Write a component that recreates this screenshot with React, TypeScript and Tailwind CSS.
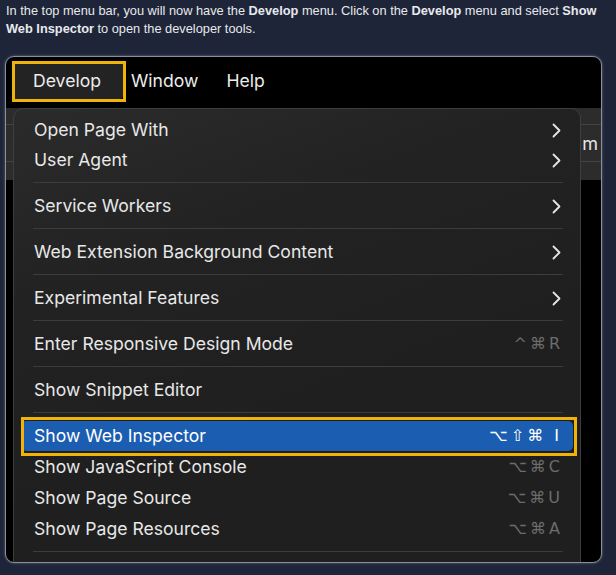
import React from "react";

type Item =
  | { kind: "sep" }
  | { kind: "item"; label: string; chevron?: boolean; shortcut?: string; active?: boolean; tall?: boolean };

const items: Item[] = [
  { kind: "item", label: "Open Page With", chevron: true },
  { kind: "item", label: "User Agent", chevron: true },
  { kind: "sep" },
  { kind: "item", label: "Service Workers", chevron: true },
  { kind: "sep" },
  { kind: "item", label: "Web Extension Background Content", chevron: true },
  { kind: "sep" },
  { kind: "item", label: "Experimental Features", chevron: true },
  { kind: "sep" },
  { kind: "item", label: "Enter Responsive Design Mode", shortcut: "^⌘R" },
  { kind: "sep" },
  { kind: "item", label: "Show Snippet Editor" },
  { kind: "sep" },
  { kind: "item", label: "Show Web Inspector", shortcut: "⌥⇧⌘ I", active: true },
  { kind: "item", label: "Show JavaScript Console", shortcut: "⌥⌘C", tall: true },
  { kind: "item", label: "Show Page Source", shortcut: "⌥⌘U", tall: true },
  { kind: "item", label: "Show Page Resources", shortcut: "⌥⌘A", tall: true },
  { kind: "sep" },
];

function Chevron() {
  return (
    <svg width="9" height="15" viewBox="0 0 9 15" fill="none">
      <path d="M1.5 1.5 L7.5 7.5 L1.5 13.5" stroke="#e6e6e6" strokeWidth="1.8" strokeLinecap="round" strokeLinejoin="round" />
    </svg>
  );
}

function Row({ item }: { item: Extract<Item, { kind: "item" }> }) {
  if (item.active) {
    return (
      <div className="relative mx-[7px] h-[30px] rounded-[5px] bg-[#1b5db0] flex items-center justify-between pl-[13px] pr-[11px] text-white">
        <span>{item.label}</span>
        <span className="tracking-[3px] text-[16px] font-['DejaVu_Sans',sans-serif] text-white">{item.shortcut}</span>
        <span className="absolute left-[0px] right-[-4px] top-[-4px] bottom-[-5px] border-[3px] border-[#f0b30a]" />
      </div>
    );
  }
  return (
    <div
      className={
        (item.tall ? "h-[31px] " : "h-[30px] ") +
        "flex items-center justify-between pl-[20px] text-[#e8e8e8] " +
        (item.shortcut ? "pr-[17px]" : "pr-[19px]")
      }
    >
      <span>{item.label}</span>
      {item.chevron && <Chevron />}
      {item.shortcut && (
        <span className="tracking-[3px] text-[16px] font-['DejaVu_Sans',sans-serif] text-[#6c6c6c]">{item.shortcut}</span>
      )}
    </div>
  );
}

export default function App() {
  return (
    <div className="w-[616px] h-[575px] bg-[#1e2538] overflow-hidden">
      <p className="h-[37px] px-[6px] pt-[2px] text-[12.8px] leading-[18px] text-[#e8e9ec] font-['Liberation_Sans',Arial,sans-serif]">
        In the top menu bar, you will now have the <b>Develop</b> menu. Click on the <b>Develop</b> menu and select <b>Show</b>
        <br />
        <b>Web Inspector</b> to open the developer tools.
      </p>
      <div className="mt-[19px] ml-[5px] w-[597px] h-[507px] rounded-[9px] border border-[#8a8f9e] bg-black overflow-hidden flex flex-col font-['Inter',sans-serif] shadow-[0_0_3px_rgba(160,170,190,0.5)]">
        {/* menu bar */}
        <div className="h-[51px] flex items-start pt-[4px] pl-[6px] text-[17.6px] text-[#ececec]">
          <div className="w-[114px] h-[41px] border-[3px] border-[#f0b30a] flex items-center">
            <div className="w-full h-full bg-[#232323] rounded-br-[4px] flex items-center pl-[18px]">Develop</div>
          </div>
          <span className="ml-[5px] h-[41px] flex items-center">Window</span>
          <span className="ml-[28px] h-[41px] flex items-center">Help</span>
        </div>
        {/* content behind menu */}
        <div className="relative flex-1">
          <div className="h-[72px] bg-[#2c2c2c] flex flex-col">
            <div className="h-[17px] border-b border-[#444]" />
            <div className="h-[37px] border-b border-[#444] flex items-center justify-end pr-[3px] text-[18px] text-[#e6e6e6]">
              m
            </div>
          </div>
          {/* dropdown menu */}
          <div className="absolute left-[7px] top-0 w-[568px] h-[470px] rounded-t-[10px] border border-[#3e3e3e] bg-[linear-gradient(160deg,#2b2b2b_0%,#222222_30%,#1f1f1f_60%)] pt-[6px] text-[17.6px] leading-[30px]">
            {items.map((it, i) =>
              it.kind === "sep" ? (
                <div key={i} className="pt-[7px] pb-[8px] pl-[19px] pr-[17px]">
                  <div className="h-px bg-[#3c3c3c]" />
                </div>
              ) : (
                <Row key={i} item={it} />
              )
            )}
          </div>
        </div>
      </div>
    </div>
  );
}
